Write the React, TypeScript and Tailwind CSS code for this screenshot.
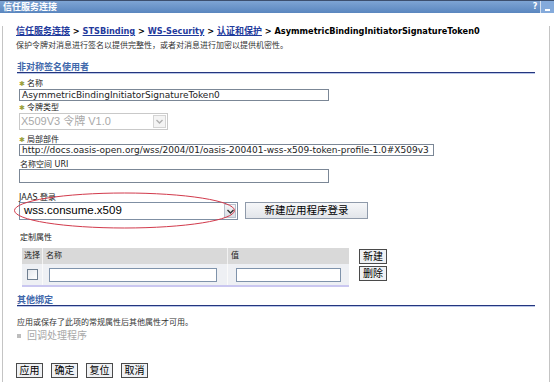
import React from "react";

const Chevron = ({ color }: { color: string }) => (
  <svg width="7" height="5" viewBox="0 0 7 5">
    <path d="M0.5 1 L3.5 4 L6.5 1" fill="none" stroke={color} strokeWidth="1.4" />
  </svg>
);

const Star = () => (
  <span className="inline-block w-[8px] text-[7px] leading-[10px] text-[#9aa03c]">✱</span>
);

const Heading = ({ text }: { text: string }) => (
  <div>
    <div className="h-[10px] pl-[1px] text-[9px] font-bold leading-[10px] text-[#3f68ab]">{text}</div>
    <div className="ml-[1px] h-px w-[518px] bg-[#24367e]" />
    <div className="ml-[1px] h-px w-[518px] bg-[#b9c6e8]" />
  </div>
);

const Box = ({ w, h, children }: { w: string; h: string; children?: React.ReactNode }) => (
  <div className={`${w} ${h} flex items-center overflow-hidden whitespace-nowrap border border-[#7b8796] bg-white pl-[2px] text-[9px] leading-none text-[#222]`}>
    {children}
  </div>
);

const SmallBtn = ({ label }: { label: string }) => (
  <div className="flex h-[15px] w-[27px] items-center justify-center border border-[#4a4a4a] bg-[#eff1f4] text-[10px] leading-none text-black">
    {label}
  </div>
);

export default function App() {
  return (
    <div className="relative h-[382px] w-[554px] overflow-hidden bg-white font-['DejaVu_Sans','Noto_Sans_CJK_SC',sans-serif] text-black">
      {/* title bar */}
      <div className="flex h-[13px] items-center border-t border-[#3d4f6e] bg-gradient-to-b from-[#7ea4d4] to-[#5a86bf] pl-[3px]">
        <span className="text-[9px] font-bold leading-none text-white">信任服务连接</span>
        <div className="ml-auto flex h-full">
          <div className="flex w-[10px] items-center justify-center text-[8px] font-bold leading-none text-white">?</div>
          <div className="w-px bg-[#d4e0f0]" />
          <div className="flex w-[13px] items-end justify-center bg-[#84aadb] pb-[2px]">
            <div className="h-[2px] w-[5px] bg-white" />
          </div>
        </div>
      </div>

      <div className="ml-[2px] h-[369px] w-[548px] border-x border-[#c4c4c4] pl-[13px]">
        {/* breadcrumb */}
        <div className="mt-[13px] h-[10px] whitespace-nowrap text-[8.2px] font-bold leading-[10px] text-black">
          <span className="text-[9px] text-[#1f3a9c] underline">信任服务连接</span>
          <span> &gt; </span>
          <span className="text-[#1f3a9c] underline">STSBinding</span>
          <span> &gt; </span>
          <span className="text-[#1f3a9c] underline">WS-Security</span>
          <span> &gt; </span>
          <span className="text-[9px] text-[#1f3a9c] underline">认证和保护</span>
          <span> &gt; AsymmetricBindingInitiatorSignatureToken0</span>
        </div>
        <div className="mt-[5px] h-[10px] whitespace-nowrap text-[8px] leading-[10px] text-[#333]">
          保护令牌对消息进行签名以提供完整性，或者对消息进行加密以提供机密性。
        </div>

        <div className="mt-[11px]">
          <Heading text="非对称签名使用者" />
        </div>

        <div className="pl-[3px]">
          <div className="mt-[5px] flex h-[10px] items-center text-[8px] leading-[10px] text-[#222]">
            <Star />
            <span>名称</span>
          </div>
          <Box w="w-[310px]" h="h-[12px]">AsymmetricBindingInitiatorSignatureToken0</Box>

          <div className="mt-[2px] flex h-[10px] items-center text-[8px] leading-[10px] text-[#222]">
            <Star />
            <span>令牌类型</span>
          </div>
          <div className="flex h-[17px] w-[149px] items-stretch border border-[#c9c9c9] bg-white">
            <div className="flex flex-1 items-center whitespace-nowrap pl-[1px] font-['Liberation_Sans','Noto_Sans_CJK_SC',sans-serif] text-[11px] leading-none text-[#a9a9a9]">
              X509V3 令牌 V1.0
            </div>
            <div className="m-[1px] flex w-[13px] items-center justify-center border border-[#d4d4d4] bg-[#f4f4f4]">
              <Chevron color="#b0b0b0" />
            </div>
          </div>

          <div className="mt-[5px] flex h-[9px] items-center text-[8px] leading-[9px] text-[#222]">
            <Star />
            <span>局部部件</span>
          </div>
          <Box w="w-[415px]" h="h-[12px]">
            http://docs.oasis-open.org/wss/2004/01/oasis-200401-wss-x509-token-profile-1.0#X509v3
          </Box>

          <div className="mt-[4px] h-[9px] pl-[1px] text-[8px] leading-[9px] text-[#222]">名称空间 URI</div>
          <Box w="w-[310px]" h="h-[14px]" />

          <div className="mt-[10px] h-[9px] text-[8px] leading-[9px] text-[#222]">JAAS 登录</div>
          <div className="flex items-start">
            <div className="flex h-[18px] w-[219px] items-stretch border border-[#7f8fa3] bg-white">
              <div className="flex flex-1 items-center pl-[4px] font-['Liberation_Sans',sans-serif] text-[11.5px] leading-none text-black">
                wss.consume.x509
              </div>
              <div className="m-[1px] flex w-[12px] items-center justify-center border border-[#b8c0cc] bg-gradient-to-b from-[#f4f6f8] to-[#d8dde4]">
                <Chevron color="#333" />
              </div>
            </div>
            <div className="ml-[7px] flex h-[17px] w-[123px] items-center justify-center border border-[#8f9aaa] bg-gradient-to-b from-[#f6f7f9] to-[#e2e5ea] text-[10.5px] leading-none text-black">
              新建应用程序登录
            </div>
          </div>

          <div className="mt-[13px] h-[10px] pl-[1px] text-[8px] leading-[10px] text-[#222]">定制属性</div>

          <div className="ml-[3px] mt-[5px] flex items-start">
            <div className="w-[327px]">
              <div className="flex h-[16px] bg-[#d9d9d9] text-[8px] leading-none text-[#222]">
                <div className="flex w-[21px] items-center justify-center border-r border-[#f2f2f2]">选择</div>
                <div className="flex w-[185px] items-center border-r border-[#f2f2f2] pl-[3px]">名称</div>
                <div className="flex w-[121px] items-center pl-[3px]">值</div>
              </div>
              <div className="flex h-[23px] border-b-2 border-[#cac7f0] bg-[#eef0f4]">
                <div className="flex w-[21px] items-center justify-center border-r border-[#fafafa]">
                  <div className="h-[11px] w-[11px] border border-[#6f7f90] bg-gradient-to-br from-[#e4e7ec] to-white" />
                </div>
                <div className="flex w-[185px] items-center border-r border-[#fafafa] pl-[6px]">
                  <div className="h-[14px] w-[168px] border border-[#7f93ab] bg-white" />
                </div>
                <div className="flex w-[121px] items-center pl-[8px]">
                  <div className="h-[14px] w-[105px] border border-[#7f93ab] bg-white" />
                </div>
              </div>
            </div>
            <div className="ml-[10px] mt-[1px] flex flex-col gap-[2px]">
              <div className="flex h-[15px] w-[28px] items-center justify-center border border-[#4a4a4a] bg-[#eff1f4] text-[10px] leading-none">新建</div>
              <div className="flex h-[15px] w-[28px] items-center justify-center border border-[#4a4a4a] bg-[#eff1f4] text-[10px] leading-none">删除</div>
            </div>
          </div>
        </div>

        <div className="mt-[8px]">
          <Heading text="其他绑定" />
        </div>

        <div className="mt-[11px] h-[10px] pl-[1px] text-[8px] leading-[10px] text-[#333]">
          应用或保存了此项的常规属性后其他属性才可用。
        </div>
        <div className="mt-[2px] flex h-[11px] items-center pl-[1px]">
          <div className="h-[4px] w-[4px] bg-[#bdbdbd]" />
          <span className="ml-[6px] text-[10px] leading-none text-[#a8a8a8]">回调处理程序</span>
        </div>

        <div className="mt-[22px] flex gap-[8px]">
          <SmallBtn label="应用" />
          <SmallBtn label="确定" />
          <SmallBtn label="复位" />
          <SmallBtn label="取消" />
        </div>
      </div>

      <svg className="pointer-events-none absolute left-0 top-0" width="554" height="382">
        <ellipse cx="124.5" cy="210.5" rx="110" ry="17.5" fill="none" stroke="#d23a4c" strokeWidth="1" />
      </svg>
    </div>
  );
}
